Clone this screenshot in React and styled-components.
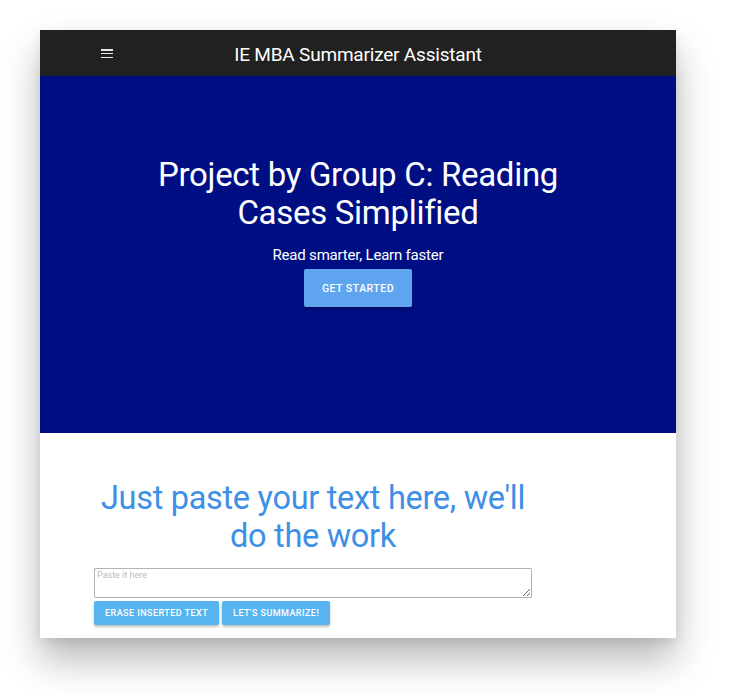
import React from 'react';
import styled, { createGlobalStyle } from 'styled-components';

const GlobalStyle = createGlobalStyle`
  html, body {
    margin: 0;
    padding: 0;
    background: #ffffff;
    font-family: Roboto, "Liberation Sans", sans-serif;
  }
`;

const Page = styled.div`
  width: 736px;
  height: 696px;
  padding: 30px 60px 0 40px;
  box-sizing: border-box;
`;

const Window = styled.div`
  width: 636px;
  height: 608px;
  display: flex;
  flex-direction: column;
  background: #ffffff;
  overflow: hidden;
  box-shadow: 0 22px 36px rgba(0, 0, 0, 0.28), 0 4px 10px rgba(0, 0, 0, 0.08);
`;

const TopBar = styled.header`
  height: 46px;
  flex: none;
  background: #212121;
  display: grid;
  grid-template-columns: 60px 1fr 60px;
  align-items: center;
`;

const MenuButton = styled.button`
  justify-self: end;
  width: 12px;
  height: 9px;
  padding: 0;
  border: none;
  background: none;
  display: flex;
  flex-direction: column;
  justify-content: space-between;
  margin-right: -13px;
  margin-top: 1px;
  cursor: pointer;

  & span {
    display: block;
    height: 1.5px;
    width: 12px;
    background: #e8e8e8;
  }
`;

const BarTitle = styled.h1`
  margin: 0;
  text-align: center;
  color: #ffffff;
  font-size: 19px;
  font-weight: 400;
  letter-spacing: -0.2px;
  padding-top: 2px;
`;

const Hero = styled.section`
  height: 357px;
  flex: none;
  background: #000e83;
  display: flex;
  flex-direction: column;
  align-items: center;
  padding-top: 80px;
  box-sizing: border-box;
`;

const HeroTitle = styled.h2`
  margin: 0;
  width: 440px;
  text-align: center;
  color: #ffffff;
  font-size: 33px;
  line-height: 38px;
  font-weight: 400;
  letter-spacing: -0.3px;
`;

const Tagline = styled.p`
  margin: 13px 0 0;
  color: #ffffff;
  font-size: 15px;
  line-height: 20px;
  letter-spacing: -0.2px;
`;

const Button = styled.button`
  border: none;
  border-radius: 2px;
  color: #ffffff;
  font-family: Roboto, "Liberation Sans", sans-serif;
  font-weight: 500;
  text-transform: uppercase;
  white-space: nowrap;
  cursor: pointer;
  background: ${p => (p.$hero ? '#5ea4ee' : '#58b4f1')};
  height: ${p => (p.$hero ? '38px' : '24px')};
  padding: ${p => (p.$hero ? '0 18px' : '0 11px')};
  font-size: ${p => (p.$hero ? '10.5px' : '9px')};
  letter-spacing: ${p => (p.$hero ? '0.5px' : '0.45px')};
  box-shadow: 0 2px 3px rgba(0, 0, 0, 0.25);
`;

const HeroButton = styled(Button)`
  margin-top: 4px;
  min-width: 106px;
`;

const Work = styled.section`
  flex: 1;
  padding: 46px 0 0 54px;
`;

const WorkInner = styled.div`
  width: 438px;
  display: flex;
  flex-direction: column;
`;

const WorkTitle = styled.h2`
  margin: 0;
  text-align: center;
  color: #3e8fe6;
  font-size: 32.5px;
  line-height: 38px;
  font-weight: 400;
  letter-spacing: -0.3px;
`;

const TextBox = styled.textarea`
  margin-top: 13px;
  width: 438px;
  height: 30px;
  box-sizing: border-box;
  border: 1px solid #b4b4b4;
  border-radius: 1px;
  padding: 1px 2px;
  font-family: Roboto, "Liberation Sans", sans-serif;
  font-size: 9px;
  resize: vertical;

  &::placeholder {
    color: #bdbdbd;
  }
`;

const Actions = styled.div`
  display: flex;
  gap: 3px;
  margin-top: 3px;
`;

export default function App() {
  return (
    <>
      <GlobalStyle />
      <Page>
        <Window>
          <TopBar>
            <MenuButton aria-label="menu">
              <span />
              <span />
              <span />
            </MenuButton>
            <BarTitle>IE MBA Summarizer Assistant</BarTitle>
          </TopBar>
          <Hero>
            <HeroTitle>Project by Group C: Reading Cases Simplified</HeroTitle>
            <Tagline>Read smarter, Learn faster</Tagline>
            <HeroButton $hero>Get started</HeroButton>
          </Hero>
          <Work>
            <WorkInner>
              <WorkTitle>Just paste your text here, we'll do the work</WorkTitle>
              <TextBox placeholder="Paste it here" />
              <Actions>
                <Button>Erase inserted text</Button>
                <Button>Let's summarize!</Button>
              </Actions>
            </WorkInner>
          </Work>
        </Window>
      </Page>
    </>
  );
}
